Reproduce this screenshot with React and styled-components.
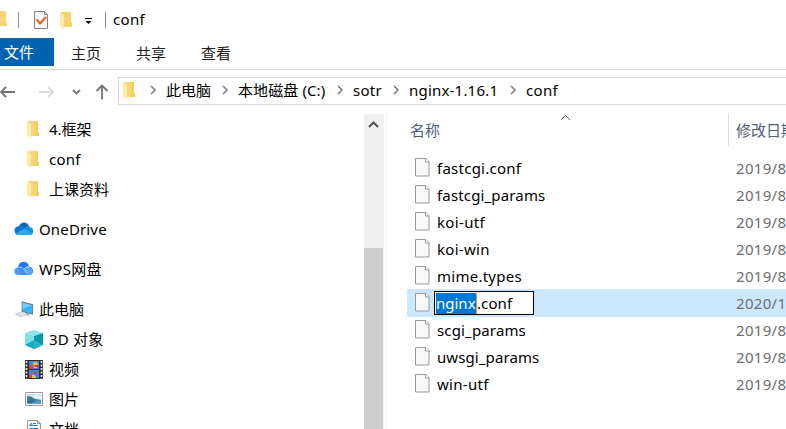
import React from "react";
import styled, { createGlobalStyle } from "styled-components";

const Global = createGlobalStyle`
  * { box-sizing: border-box; }
  body { margin: 0; background: #fff; overflow: hidden; }
  svg { display: block; flex: none; }
`;

const Window = styled.div`
  width: 786px;
  height: 429px;
  overflow: hidden;
  display: flex;
  flex-direction: column;
  background: #fff;
  color: #000;
  font: 15px/20px "Noto Sans", "Noto Sans CJK SC", sans-serif;
  white-space: nowrap;
`;

const Label = styled.span`
  letter-spacing: ${(p) => p.$track || 0}px;
`;

const TitleBar = styled.header`
  height: 38px;
  flex: none;
  display: flex;
  align-items: center;
`;

const TitleDivider = styled.i`
  width: 1px;
  height: 16px;
  background: #8c8c8c;
  margin: 1px ${(p) => p.$right}px 0 ${(p) => p.$left}px;
`;

const Ribbon = styled.nav`
  height: 32px;
  flex: none;
  display: flex;
  align-items: flex-start;
  border-bottom: 1px solid #dadbdc;
`;

const FileTab = styled.div`
  width: 54px;
  height: 28px;
  padding: 4px 0 0 4px;
  background: #0063b1;
  color: #fff;
`;

const Tab = styled.div`
  width: 65px;
  padding: 5px 0 0 17px;
  color: #222;
`;

const AddressRow = styled.div`
  height: 44px;
  flex: none;
  display: flex;
  align-items: flex-start;
  padding-top: 7px;
`;

const NavButtons = styled.div`
  width: 118px;
  height: 28px;
  flex: none;
`;

const AddressBox = styled.div`
  flex: 1;
  height: 28px;
  display: flex;
  align-items: center;
  border: 1px solid #d9d9d9;
  border-right: 0;
  padding: 0 0 2px 4px;
`;

const Crumb = styled.span`
  width: ${(p) => p.$width}px;
  letter-spacing: ${(p) => p.$track || 0}px;
  flex: none;
`;

const CrumbArrow = styled.svg`
  margin: 0 ${(p) => p.$gap}px 0 0;
`;

const Body = styled.main`
  flex: 1;
  min-height: 0;
  display: flex;
`;

const Tree = styled.aside`
  width: 364px;
  flex: none;
`;

const TreeGroup = styled.section`
  margin-bottom: 10px;
`;

const TreeRow = styled.div`
  height: 30px;
  display: flex;
  align-items: center;
  padding-left: ${(p) => (p.$child ? 25 : 14)}px;
`;

const TreeIcon = styled.span`
  width: ${(p) => (p.$child ? 24 : 25)}px;
  flex: none;
`;

const ScrollTrack = styled.div`
  width: 20px;
  background: #f0f0f0;
  flex: none;
`;

const ScrollUp = styled.div`
  height: 134px;
  padding: 6px 0 0 4px;
`;

const ScrollThumb = styled.div`
  width: 19px;
  height: 190px;
  background: #cdcdcd;
`;

const Files = styled.section`
  flex: 1;
  min-width: 0;
  margin-left: 2px;
  border-left: 1px solid #f3f3f3;
`;

const FileHeader = styled.div`
  height: 32px;
  display: flex;
  color: #4c607a;
  margin-bottom: 8px;
`;

const NameHeading = styled.div`
  width: 341px;
  flex: none;
  display: flex;
  padding: 6px 0 0 23px;
`;

const SortMark = styled.svg`
  margin: -6px 0 0 120px;
`;

const DateHeading = styled.div`
  border-left: 1px solid #dedede;
  padding: 6px 0 0 7px;
`;

const FileRow = styled.div`
  height: ${(p) => (p.$selected ? 28 : 27)}px;
  margin: 0 0 ${(p) => (p.$selected ? -1 : 0)}px 20px;
  display: flex;
  align-items: flex-start;
  padding: 4px 0 0 8px;
  background: ${(p) => (p.$selected ? "#cce8ff" : "transparent")};
`;

const FileName = styled.div`
  width: 306px;
  flex: none;
  padding-left: 7px;
  letter-spacing: ${(p) => p.$track}px;
`;

const DateCell = styled.div`
  color: #6d6d6d;
  letter-spacing: 0.3px;
`;

const RenameSlot = styled.div`
  width: 306px;
  flex: none;
  margin-top: -2px;
  padding-left: 4px;
`;

const RenameBox = styled.div`
  width: 100px;
  height: 24px;
  display: flex;
  align-items: center;
  border: 1px solid #000;
  background: #fff;
  padding-left: 1px;
`;

const SelectedText = styled.span`
  width: 41px;
  height: 21px;
  background: #0078d7;
  color: #fff;
  border-right: 1px solid #ff8728;
`;

const Folder = () => (
  <svg width="13" height="18" viewBox="0 0 13 18">
    <path d="M1 1h10v11l1 1v3H3z" fill="#f7d775" />
    <path d="M8 1h3v11l1 1v3H8z" fill="#f4ce62" />
    <path d="M0 1l4 3v14l-4-3z" fill="#ffe9a6" />
  </svg>
);

const Page = () => (
  <svg width="15" height="19" viewBox="0 0 15 19">
    <path d="M.5.5h10.500l3 3v14.500H.5z" fill="#f7f8f8" stroke="#999" />
    <path d="M10.500.5v3.500h3.500" fill="#fff" stroke="#999" />
  </svg>
);

const OneDrive = () => (
  <svg width="20" height="14" viewBox="0 0 21 15">
    <path d="M5 5C7-1 14-1 16 5l-7 5-5-2z" fill="#0a64b7" />
    <path d="M5 4.500c-6-.5-6 9-1 9.500L14 7C10 5 8 4 5 4.500" fill="#0878d0" />
    <path d="M12 6c3-3 5-1 5 0 5 0 4 8 0 8L9 8z" fill="#168fe4" />
    <path d="M2 12l9-5 8.500 5.300c-.5 1-1.500 1.700-3 1.700H5c-1.500-.1-2.300-.6-3-2" fill="#27a7ed" />
  </svg>
);

const CloudDisk = () => (
  <svg width="20" height="14" viewBox="0 0 20 14">
    <path d="M4 6C4-2 14-2 15 4.500c5.500.5 5 8.500.5 8.500H9z" fill="#1f74f5" />
    <path d="M4 5c-5 1-5 8 0 8h5L4 7z" fill="#4c9dff" />
    <path d="M10 7c2-3 5-2.500 5.500-2 4 1 4 8-.5 8h-2z" fill="#5aa4fb" />
    <path d="M3.500 5.500C7 4 9 6 11 9l3 4H9C6 13 5 9 3.500 5.500" fill="#3f8ffa" />
    <path d="M3 5.500c4-1.500 6 .5 8 3.500l2 2.500M10 7c2-2.500 4-2.500 6-2" fill="none" stroke="#d3e7ff" strokeWidth=".8" />
  </svg>
);

const Computer = () => (
  <svg width="21" height="18" viewBox="0 0 22 18">
    <path d="M8 1l12 3v11L8 12z" fill="#687e8d" />
    <path d="M9 2.500l10 2.500v8.500L9 11z" fill="#35b4f2" />
    <path d="M9 2.500l10 2.500L9 9z" fill="#71cef8" />
    <path d="M12 13l4 1v2l-4-1" fill="#9aa6ad" />
    <path d="M1 14l7-2 6 3-7 2z" fill="#d3d9dd" stroke="#b2babf" strokeWidth=".5" />
    <path d="M4 14l6 2M7 13l5 2" stroke="#fff" strokeWidth=".6" />
  </svg>
);

const Cube = () => (
  <svg width="18" height="19" viewBox="0 0 18 19">
    <path d="M0 3l9-3 9 3-9 3z" fill="#8de3ea" />
    <path d="M0 3l9 3v13l-9-4z" fill="#7adfe7" />
    <path d="M18 3L9 6v13l9-4z" fill="#0797ae" />
    <path d="M0 15l9-5v9z" fill="#19a9c0" />
    <path d="M9 10l9 5-9 4z" fill="#2bb4c5" />
  </svg>
);

const Film = () => (
  <svg width="18" height="19" viewBox="0 0 18 19">
    <path d="M0 0h18v19H0z" fill="#303030" />
    <path d="M4 1h10v8H4zM4 10h10v8H4z" fill="#4a86d8" />
    <path d="M4 6q2-3 4 0v3H4M4 16q2-3 5-1v3H4" fill="#d94447" />
    <path d="M8 3q3-3 5 1l-1 4H9z" fill="#e6c62f" />
    <path d="M9 5h4v2h-3zM8 12h4l-2 3z" fill="#d93939" />
    <path d="M7 15q3-2 4 3H7" fill="#e3c33c" />
    <path d="M1.500 1v18M16.500 1v18" stroke="#eee" strokeWidth="1.600" strokeDasharray="2 1.500" />
  </svg>
);

const Picture = () => (
  <svg width="18" height="14" viewBox="0 0 18 14">
    <path d="M.5.5h17v13H.5z" fill="#fff" stroke="#9b9b9b" />
    <path d="M2 2h14v10H2z" fill="#c4e3f5" />
    <path d="M2 4q4 0 8 3l6 1v1H2z" fill="#447784" />
    <path d="M2 8.500h14V12H2z" fill="#4f9fc8" />
    <path d="M2 9q7-2 10 0l-6 2H2z" fill="#2b7396" />
    <path d="M8 4l4-1 4 2v1H9z" fill="#eaf6fc" />
  </svg>
);

const Document = () => (
  <svg width="18" height="18" viewBox="0 0 18 18">
    <path d="M2.500.5h10l3 3v14h-13z" fill="#fff" stroke="#8f9599" />
    <path d="M12.500.5v3h3" fill="none" stroke="#8f9599" />
    <path d="M4.500 6l2-3 1 3M5 5.500h2M8 3.500h3M8 5.500h5M4.500 8.500h9M4.500 11.500h9M4.500 14.500h9" fill="none" stroke="#2384c6" />
  </svg>
);

const QuickAccess = () => (
  <svg width="97" height="38" viewBox="0 0 97 38">
    <path d="M0 11h6v11l1 1v3H0z" fill="#f7d578" />
    <path d="M18.500 12v16" stroke="#909090" />
    <path d="M34.500 11.500h10l3 3v14h-13z" fill="#f8f9fa" stroke="#858585" />
    <path d="M44.500 11.500v3h3" fill="none" stroke="#858585" />
    <path d="M36.500 19.500l3.500 4 6-6.500" fill="none" stroke="#f15a16" strokeWidth="2" />
    <g transform="translate(60 11)">
      <path d="M1 1h10v10l1 1v4H3z" fill="#f6d371" />
      <path d="M0 1l4 3v14l-4-3z" fill="#ffe9a6" />
    </g>
    <path d="M85 18.500h7" stroke="#000" />
    <path d="M85.500 21h6l-3 3z" fill="#000" />
  </svg>
);

const NavArrows = () => (
  <svg width="118" height="28" viewBox="0 0 118 28">
    <g fill="none" strokeWidth="1.800">
      <path d="M15 15H1M6 10l-5 5 5 5" stroke="#747474" />
      <path d="M39 15h14M48 10l5 5-5 5" stroke="#dadada" />
      <path d="M73 13l3.500 3.500L80 13" stroke="#777" />
      <path d="M102 22.500V8.500M96.500 14l5.500-5.500 5.500 5.500" stroke="#747474" />
    </g>
  </svg>
);

const Separator = ({ gap }) => (
  <CrumbArrow $gap={gap} width="7" height="10" viewBox="0 0 7 10">
    <path d="M1 1l4 4-4 4" fill="none" stroke="#777" strokeWidth="1.500" />
  </CrumbArrow>
);

const AddressFolder = styled.div`
  width: 27px;
`;

const groups = [
  [
    { name: "4.框架", icon: Folder, folder: true, child: true },
    { name: "conf", icon: Folder, folder: true, child: true, track: 0.2 },
    { name: "上课资料", icon: Folder, folder: true, child: true },
  ],
  [{ name: "OneDrive", icon: OneDrive, track: 0.15 }],
  [{ name: "WPS网盘", icon: CloudDisk, track: 0.3 }],
  [
    { name: "此电脑", icon: Computer },
    { name: "3D 对象", icon: Cube, child: true, track: 0.2 },
    { name: "视频", icon: Film, child: true },
    { name: "图片", icon: Picture, child: true },
    { name: "文档", icon: Document, child: true },
  ],
];

const FolderInset = styled.span`
  display: block;
  padding-left: 2px;
`;

const files = [
  ["fastcgi.conf", "2019/8", 0.25],
  ["fastcgi_params", "2019/8", 0.15],
  ["koi-utf", "2019/8", 0.35],
  ["koi-win", "2019/8", 0.3],
  ["mime.types", "2019/8", 0.25],
  ["nginx.conf", "2020/1", 0],
  ["scgi_params", "2019/8", 0.15],
  ["uwsgi_params", "2019/8", 0.1],
  ["win-utf", "2019/8", 0.3],
];

export default function App() {
  return (
    <Window>
      <Global />
      <TitleBar>
        <QuickAccess />
        <TitleDivider $left={8} $right={7} />
        <Label $track={0.3}>conf</Label>
      </TitleBar>
      <Ribbon>
        <FileTab>文件</FileTab>
        <Tab>主页</Tab>
        <Tab>共享</Tab>
        <Tab>查看</Tab>
      </Ribbon>
      <AddressRow>
        <NavButtons><NavArrows /></NavButtons>
        <AddressBox>
          <AddressFolder><Folder /></AddressFolder>
          <Separator gap={9} />
          <Crumb $width={56}>此电脑</Crumb>
          <Separator gap={9} />
          <Crumb $width={99} $track={0.1}>本地磁盘 (C:)</Crumb>
          <Separator gap={9} />
          <Crumb $width={40} $track={0.3}>sotr</Crumb>
          <Separator gap={9} />
          <Crumb $width={101} $track={0.2}>nginx-1.16.1</Crumb>
          <Separator gap={9} />
          <Crumb $width={45} $track={0.3}>conf</Crumb>
        </AddressBox>
      </AddressRow>
      <Body>
        <Tree>
          {groups.map((rows, i) => (
            <TreeGroup key={i}>
              {rows.map(({ name, icon: Icon, child, folder, track }) => (
                <TreeRow key={name} $child={child}>
                  <TreeIcon $child={child}>
                    {folder ? <FolderInset><Icon /></FolderInset> : <Icon />}
                  </TreeIcon>
                  <Label $track={track}>{name}</Label>
                </TreeRow>
              ))}
            </TreeGroup>
          ))}
        </Tree>
        <ScrollTrack>
          <ScrollUp>
            <svg width="11" height="10" viewBox="0 0 11 10">
              <path d="M1 7l4.500-4.500L10 7" fill="none" stroke="#505050" strokeWidth="2" />
            </svg>
          </ScrollUp>
          <ScrollThumb />
        </ScrollTrack>
        <Files>
          <FileHeader>
            <NameHeading>
              名称
              <SortMark width="11" height="8" viewBox="0 0 11 8">
                <path d="M1 6l4.500-4.500L10 6" fill="none" stroke="#666" />
              </SortMark>
            </NameHeading>
            <DateHeading>修改日期</DateHeading>
          </FileHeader>
          {files.map(([name, date, track]) => {
            const selected = name === "nginx.conf";
            return (
              <FileRow key={name} $selected={selected}>
                <Page />
                {selected ? (
                  <RenameSlot>
                    <RenameBox>
                      <SelectedText>nginx</SelectedText>
                      <Label $track={0.1}>.conf</Label>
                    </RenameBox>
                  </RenameSlot>
                ) : (
                  <FileName $track={track}>{name}</FileName>
                )}
                <DateCell>{date}</DateCell>
              </FileRow>
            );
          })}
        </Files>
      </Body>
    </Window>
  );
}
